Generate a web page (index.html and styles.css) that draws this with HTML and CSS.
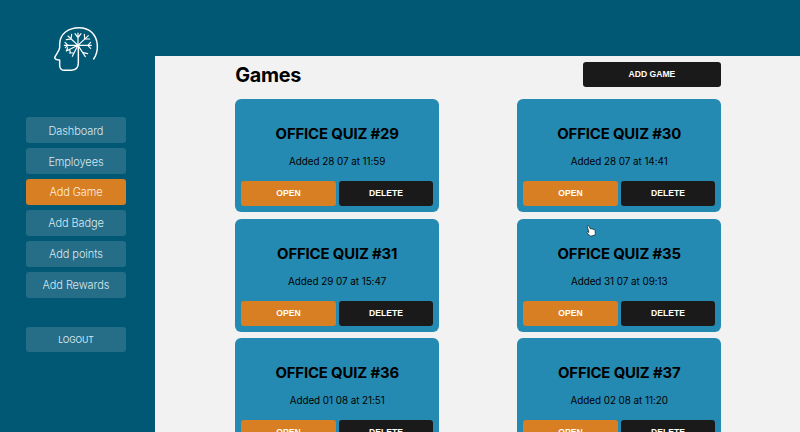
FILE: index.html
```html
<!DOCTYPE html>
<html lang="en">
<head>
<meta charset="utf-8">
<title>Games</title>
<link rel="stylesheet" href="styles.css">
</head>
<body>
<div class="app">
  <aside class="sidebar">
    <svg class="logo" viewBox="0 0 225 195" fill="none" stroke="#fff" stroke-linecap="round" stroke-linejoin="round">
      <path stroke-width="4.4" d="M161 132C169 120 173 107 172 91C170 59 149 38 117 38C85 38 60 57 59 86V98C58 108 49 117 44 128C45 133 51 135 59 135V153C60 162 65 166 74 166H94C108 165 115 157 115 145V91"/>
      <path stroke-width="3.5" d="M114 91L73 91M114 91L84 63M114 91V54M114 91L145 62M114 91L154 91M114 91L136 125M114 91L97 124M114 91L79 108M84 91L75 82M84 91L76 98M93 72L79 74M93 72L95 58M114 68L105 56M114 68L123 56M134 72L133 58M134 72L149 72M143 91L152 82M143 91L152 100M129 113L143 116M79 108L83 98M89 103L91 112M101 114L88 114"/>
    </svg>
    <nav class="menu">
      <a class="item">Dashboard</a>
      <a class="item">Employees</a>
      <a class="item active">Add Game</a>
      <a class="item">Add Badge</a>
      <a class="item">Add points</a>
      <a class="item">Add Rewards</a>
    </nav>
    <a class="item logout">LOGOUT</a>
  </aside>
  <main class="content">
    <header class="heading">
      <h1>Games</h1>
      <button class="btn add">ADD GAME</button>
    </header>
    <section class="games">
      <article class="card"><h2>OFFICE QUIZ #29</h2><p>Added 28 07 at 11:59</p><div class="actions"><button class="btn open">OPEN</button><button class="btn">DELETE</button></div></article>
      <article class="card"><h2>OFFICE QUIZ #30</h2><p>Added 28 07 at 14:41</p><div class="actions"><button class="btn open">OPEN</button><button class="btn">DELETE</button></div></article>
      <article class="card"><h2>OFFICE QUIZ #31</h2><p>Added 29 07 at 15:47</p><div class="actions"><button class="btn open">OPEN</button><button class="btn">DELETE</button></div></article>
      <article class="card"><h2>OFFICE QUIZ #35</h2><p>Added 31 07 at 09:13</p><div class="actions"><button class="btn open">OPEN</button><button class="btn">DELETE</button></div></article>
      <article class="card"><h2>OFFICE QUIZ #36</h2><p>Added 01 08 at 21:51</p><div class="actions"><button class="btn open">OPEN</button><button class="btn">DELETE</button></div></article>
      <article class="card"><h2>OFFICE QUIZ #37</h2><p>Added 02 08 at 11:20</p><div class="actions"><button class="btn open">OPEN</button><button class="btn">DELETE</button></div></article>
    </section>
  </main>
</div>
<svg class="pointer" viewBox="0 0 10 12" fill="#fff" stroke="#182b33" stroke-width=".8" stroke-linejoin="round">
  <path d="M1.2 1.5C1.4.4 2.6.4 3 1.2L4.5 4C5 3.5 5.8 3.6 6 4.2C6.6 3.7 7.3 3.9 7.5 4.5C8.2 4.2 8.8 4.6 9 5.3L9.4 8.2L8.8 10.2L4.7 11.2L1 8.2C.5 7.3 1.2 6.7 2 7L3 7.4Z"/>
</svg>
</body>
</html>
```

FILE: styles.css
```css
* { box-sizing: border-box; }

body {
  margin: 0;
  height: 432px;
  overflow: hidden;
  background: #005875;
  font-family: Inter, "Liberation Sans", sans-serif;
  color: #000;
}

.app {
  display: grid;
  grid-template-columns: 154.5px 1fr;
  height: 432px;
}

.sidebar {
  display: flex;
  flex-direction: column;
  padding: 15px 28.3px 0 25.7px;
}

.logo {
  width: 75px;
  height: 65px;
  margin-left: 14.3px;
}

.menu {
  display: flex;
  flex-direction: column;
  gap: 4.9px;
  margin-top: 37.2px;
}

.item {
  display: flex;
  align-items: center;
  justify-content: center;
  height: 26px;
  padding-top: 1px;
  border-radius: 3px;
  background: #266d88;
  color: #d9e9ef;
  font-size: 11px;
  font-weight: 300;
  letter-spacing: -.1px;
}

.active { background: #d87e23; color: #fff0df; }

.logout {
  height: 25px;
  margin-top: 29.8px;
  padding-top: 0;
  font-size: 8.6px;
  font-weight: 400;
}

.content {
  height: 376px;
  margin-top: 56px;
  padding: 6.3px 78.8px 0 80.7px;
  background: #f3f2f3;
  overflow: hidden;
}

.heading {
  display: flex;
  align-items: center;
  justify-content: space-between;
  height: 25px;
}

h1 {
  margin: 0;
  font-size: 19.8px;
  line-height: 24px;
  font-weight: 700;
  letter-spacing: -.25px;
}

.btn {
  flex: 1;
  height: 25px;
  padding: 0 0 1px;
  border: 0;
  border-radius: 3px;
  background: #1b1a1b;
  color: #fff;
  font: bold 8.6px "Liberation Sans", Arial, sans-serif;
}

.add { flex: 0 0 138.5px; }
.open { background: #d87e23; }

.games {
  display: grid;
  grid-template-columns: 204px 204px;
  justify-content: space-between;
  gap: 6.3px 0;
  margin-top: 12.2px;
}

.card {
  display: flex;
  flex-direction: column;
  height: 113px;
  padding: 26px 6px 6px;
  border-radius: 6px;
  background: #248ab2;
  text-align: center;
}

h2 {
  margin: 0;
  font-size: 14.9px;
  line-height: 18px;
  font-weight: 700;
  letter-spacing: -.15px;
}

.card p {
  margin: 11px 0 0;
  font-size: 9.9px;
  line-height: 14px;
  letter-spacing: -.05px;
}

.actions {
  display: flex;
  gap: 3px;
  margin-top: auto;
}

.pointer {
  position: absolute;
  left: 586px;
  top: 225px;
  width: 10px;
  height: 12px;
}
```
